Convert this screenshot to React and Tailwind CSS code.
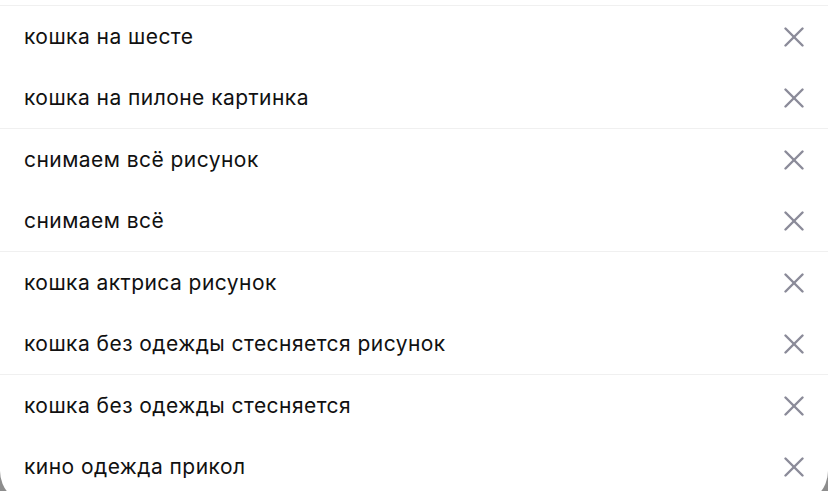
import React from 'react'

const items = [
  'кошка на шесте',
  'кошка на пилоне картинка',
  'снимаем всё рисунок',
  'снимаем всё',
  'кошка актриса рисунок',
  'кошка без одежды стесняется рисунок',
  'кошка без одежды стесняется',
  'кино одежда прикол',
]

const CloseIcon = () => (
  <svg width="20" height="20" viewBox="0 0 20 20" fill="none" stroke="#8b8b99" strokeWidth="2.4" strokeLinecap="round">
    <path d="M1.5 1.5 L18.5 18.5" />
    <path d="M18.5 1.5 L1.5 18.5" />
  </svg>
)

const Row = ({ text }) => (
  <div className="h-[61px] flex items-center justify-between px-6">
    <span className="text-[21px] text-[#111111] tracking-[0.45px]">{text}</span>
    <button className="w-5 h-5 flex items-center justify-center">
      <CloseIcon />
    </button>
  </div>
)

const App = () => {
  // lines only show between every other row in the shot
  const pairs = []
  for (let i = 0; i < items.length; i += 2) pairs.push(items.slice(i, i + 2))

  return (
    <div className="h-[491px] w-[828px] overflow-hidden bg-[#8d8d8d]" style={{ fontFamily: 'Inter, "Noto Sans", sans-serif' }}>
      <div className="bg-white rounded-b-[33px] pt-[5px] pb-[7px]">
        {pairs.map((pair, i) => (
          <div key={i} className="border-t border-[#f0f0f0]">
            {pair.map((t) => (
              <Row key={t} text={t} />
            ))}
          </div>
        ))}
      </div>
    </div>
  )
}

export default App
